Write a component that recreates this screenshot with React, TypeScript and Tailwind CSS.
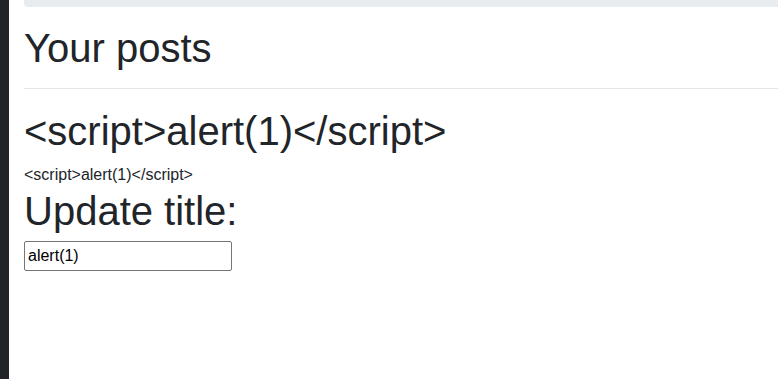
export default function App() {
  return (
    <div className="flex min-h-[379px] bg-white font-['Liberation_Sans',Arial,sans-serif] text-[#212529]">
      <div className="w-[9px] shrink-0 bg-[#212529]" />
      <main className="flex-1 pl-[15px]">
        <div className="h-[7px] rounded-bl-[4px] bg-[#e9ecef]" />
        <h1 className="mt-[17px] mb-[8px] text-[40px] leading-[48px]">Your posts</h1>
        <hr className="mt-[16px] border-t border-[rgba(0,0,0,0.1)]" />
        <div className="mt-[18px]">
          <h1 className="mb-[8px] text-[40px] leading-[48px]">{'<script>alert(1)</script>'}</h1>
          <p className="text-[16px] leading-[24px]">{'<script>alert(1)</script>'}</p>
          <h1 className="mb-[6px] text-[40px] leading-[48px]">Update title:</h1>
          <input
            className="h-[30px] w-[208px] rounded-[2px] border border-[#767676] px-[3px] text-[16px] text-black"
            defaultValue="alert(1)"
          />
        </div>
      </main>
    </div>
  );
}
